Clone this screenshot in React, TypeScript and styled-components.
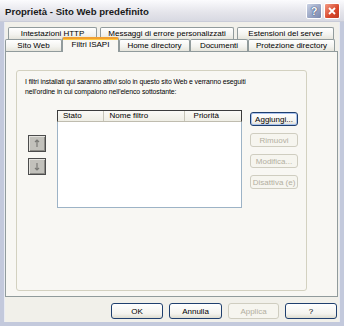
import React from "react";
import styled, { createGlobalStyle, css } from "styled-components";

const GlobalStyle = createGlobalStyle`
  html, body {
    margin: 0;
    padding: 0;
    background: #f1f0ea;
  }
  body {
    font-family: "Liberation Sans", Arial, sans-serif;
    font-size: 8px;
    color: #000;
  }
`;

const Window = styled.div`
  width: 344px;
  height: 326px;
  box-sizing: border-box;
  display: flex;
  flex-direction: column;
  background: #f1f0ea;
`;

const TitleBar = styled.div`
  height: 22px;
  flex: none;
  display: flex;
  align-items: center;
  padding: 0 4px 0 5px;
  box-sizing: border-box;
  background: linear-gradient(#fbfbfd, #e4e4ea 60%, #d8d9e2);
  border-bottom: 1px solid #c9ccd8;
`;

const Title = styled.span`
  flex: 1;
  font-weight: bold;
  font-size: 9.6px;
  color: #1a1a1a;
  padding-top: 1px;
`;

const CaptionButton = styled.div<{ $close?: boolean }>`
  width: 16px;
  height: 16px;
  box-sizing: border-box;
  border: 1px solid #fff;
  border-radius: 2px;
  margin-left: 2px;
  display: flex;
  align-items: center;
  justify-content: center;
  color: #fff;
  font-weight: bold;
  font-size: 11px;
  ${(p) =>
    p.$close
      ? css`
          background: linear-gradient(135deg, #f29a84, #d8462a 60%, #c03a20);
        `
      : css`
          background: linear-gradient(135deg, #c9d1e4, #8e9bbd 70%, #7987ab);
          text-shadow: 0 0 1px #243a6a, 0 0 1px #243a6a;
        `}
`;

const Frame = styled.div`
  flex: 1;
  display: flex;
  flex-direction: column;
  border-left: 4px solid #c3c9dc;
  border-right: 4px solid #c3c9dc;
  border-bottom: 4px solid #c3c9dc;
  box-shadow: inset 1px 0 0 #e8ebf3, inset -1px 0 0 #e8ebf3;
  padding: 5px 2px 3px 1px;
`;

const TabRow = styled.div<{ $back?: boolean }>`
  display: flex;
  height: 12px;
  align-items: flex-end;
  ${(p) =>
    p.$back &&
    css`
      padding-left: 3px;
      gap: 3px;
    `}
`;

const Tab = styled.div<{ $w: number; $active?: boolean }>`
  width: ${(p) => p.$w}px;
  height: 12px;
  box-sizing: border-box;
  flex: none;
  display: flex;
  align-items: center;
  justify-content: center;
  white-space: nowrap;
  border: 1px solid #919b9c;
  border-bottom: none;
  border-radius: 2px 2px 0 0;
  background: linear-gradient(#ffffff, #f3f3ef 60%, #e6e5dc);
  ${(p) =>
    p.$active &&
    css`
      position: relative;
      z-index: 2;
      height: 15px;
      margin: 0 0 -1px;
      padding-bottom: 2px;
      background: #f8f7f3;
      border-top: 2px solid #f0a032;
      box-shadow: inset 0 1px 0 #ffc83c;
    `}
`;

const Panel = styled.div`
  height: 246px;
  box-sizing: border-box;
  border: 1px solid #919b9c;
  background: #f8f7f3;
  padding: 18px 32px 5px 10px;
  display: flex;
`;

const Group = styled.div`
  flex: 1;
  border: 1px solid #d3d1c0;
  border-radius: 3px;
  padding: 6px 8px 0;
`;

const Description = styled.p`
  margin: 0;
  font-size: 6.9px;
  letter-spacing: -0.1px;
  line-height: 9.5px;
  white-space: nowrap;
`;

const Content = styled.div`
  display: flex;
  margin-top: 14px;
  align-items: flex-start;
`;

const ArrowColumn = styled.div`
  display: flex;
  flex-direction: column;
  gap: 6px;
  margin: 25px 11px 0 3px;
`;

const ArrowButton = styled.div`
  width: 18px;
  height: 17px;
  box-sizing: border-box;
  background: #c2c1bb;
  border: 1px solid #4c4c4c;
  box-shadow: inset 1px 1px 0 #e4e3de, inset -1px -1px 0 #8c8b86;
  display: flex;
  align-items: center;
  justify-content: center;
`;

const List = styled.div`
  width: 185px;
  height: 98px;
  box-sizing: border-box;
  border: 1px solid #9db3c6;
  background: #fff;
`;

const ListHeader = styled.div`
  display: flex;
  height: 10px;
  margin: -1px -1px 0;
  border: 1px solid #3c3c3c;
  border-bottom-color: #bfbcaf;
  background: linear-gradient(#fbfaf6, #efeee5);
`;

const Column = styled.div<{ $w: number; $pad: number }>`
  width: ${(p) => p.$w}px;
  box-sizing: border-box;
  padding-left: ${(p) => p.$pad}px;
  line-height: 9px;
  border-right: 1px solid #c7c5b8;
  &:last-child {
    border-right: none;
  }
`;

const SideButtons = styled.div`
  display: flex;
  flex-direction: column;
  gap: 7px;
  margin: 2px 0 0 8px;
`;

const Button = styled.div<{ $w?: number; $h?: number; $disabled?: boolean; $default?: boolean }>`
  width: ${(p) => p.$w ?? 48}px;
  height: ${(p) => p.$h ?? 14}px;
  box-sizing: border-box;
  display: flex;
  align-items: center;
  justify-content: center;
  white-space: nowrap;
  border: 1px solid #1f3f6e;
  border-radius: 3px;
  background: linear-gradient(#ffffff, #f4f3ee 70%, #dedcd0);
  color: #000;
  ${(p) =>
    p.$default &&
    css`
      box-shadow: inset 0 0 0 1px #a9c2ee;
    `}
  ${(p) =>
    p.$disabled &&
    css`
      border-color: #cfcdc0;
      background: #f6f5ef;
      color: #b3af9f;
    `}
`;

const Footer = styled.div`
  display: flex;
  justify-content: flex-end;
  gap: 6px;
  margin-top: 6px;
  padding-right: 1px;
`;

const Arrow = ({ down }: { down?: boolean }) => (
  <svg width="6" height="9" viewBox="0 0 6 9" style={{ transform: down ? "rotate(180deg)" : undefined }}>
    <path d="M3 1 V8 M1 3 L3 1 L5 3" stroke="#7a7a76" strokeWidth="1.2" fill="none" />
  </svg>
);

export default function App() {
  return (
    <>
      <GlobalStyle />
      <Window>
        <TitleBar>
          <Title>Proprietà - Sito Web predefinito</Title>
          <CaptionButton>?</CaptionButton>
          <CaptionButton $close>
            <svg width="8" height="8" viewBox="0 0 8 8">
              <path d="M1 1 L7 7 M7 1 L1 7" stroke="#fff" strokeWidth="1.8" />
            </svg>
          </CaptionButton>
        </TitleBar>
        <Frame>
          <TabRow $back>
            <Tab $w={89}>Intestazioni HTTP</Tab>
            <Tab $w={134}>Messaggi di errore personalizzati</Tab>
            <Tab $w={97}>Estensioni del server</Tab>
          </TabRow>
          <TabRow>
            <Tab $w={57}>Sito Web</Tab>
            <Tab $w={57} $active>Filtri ISAPI</Tab>
            <Tab $w={71}>Home directory</Tab>
            <Tab $w={58}>Documenti</Tab>
            <Tab $w={87}>Protezione directory</Tab>
          </TabRow>
          <Panel>
            <Group>
              <Description>
                I filtri installati qui saranno attivi solo in questo sito Web e verranno eseguiti
                <br />
                nell'ordine in cui compaiono nell'elenco sottostante:
              </Description>
              <Content>
                <ArrowColumn>
                  <ArrowButton>
                    <Arrow />
                  </ArrowButton>
                  <ArrowButton>
                    <Arrow down />
                  </ArrowButton>
                </ArrowColumn>
                <List>
                  <ListHeader>
                    <Column $w={46} $pad={5}>Stato</Column>
                    <Column $w={82} $pad={6}>Nome filtro</Column>
                    <Column $w={57} $pad={9}>Priorità</Column>
                  </ListHeader>
                </List>
                <SideButtons>
                  <Button $default>Aggiungi...</Button>
                  <Button $disabled>Rimuovi</Button>
                  <Button $disabled>Modifica...</Button>
                  <Button $disabled>Disattiva (e)</Button>
                </SideButtons>
              </Content>
            </Group>
          </Panel>
          <Footer>
            <Button $w={52} $h={16}>OK</Button>
            <Button $w={53} $h={16}>Annulla</Button>
            <Button $w={51} $h={16} $disabled>Applica</Button>
            <Button $w={52} $h={16}>?</Button>
          </Footer>
        </Frame>
      </Window>
    </>
  );
}
